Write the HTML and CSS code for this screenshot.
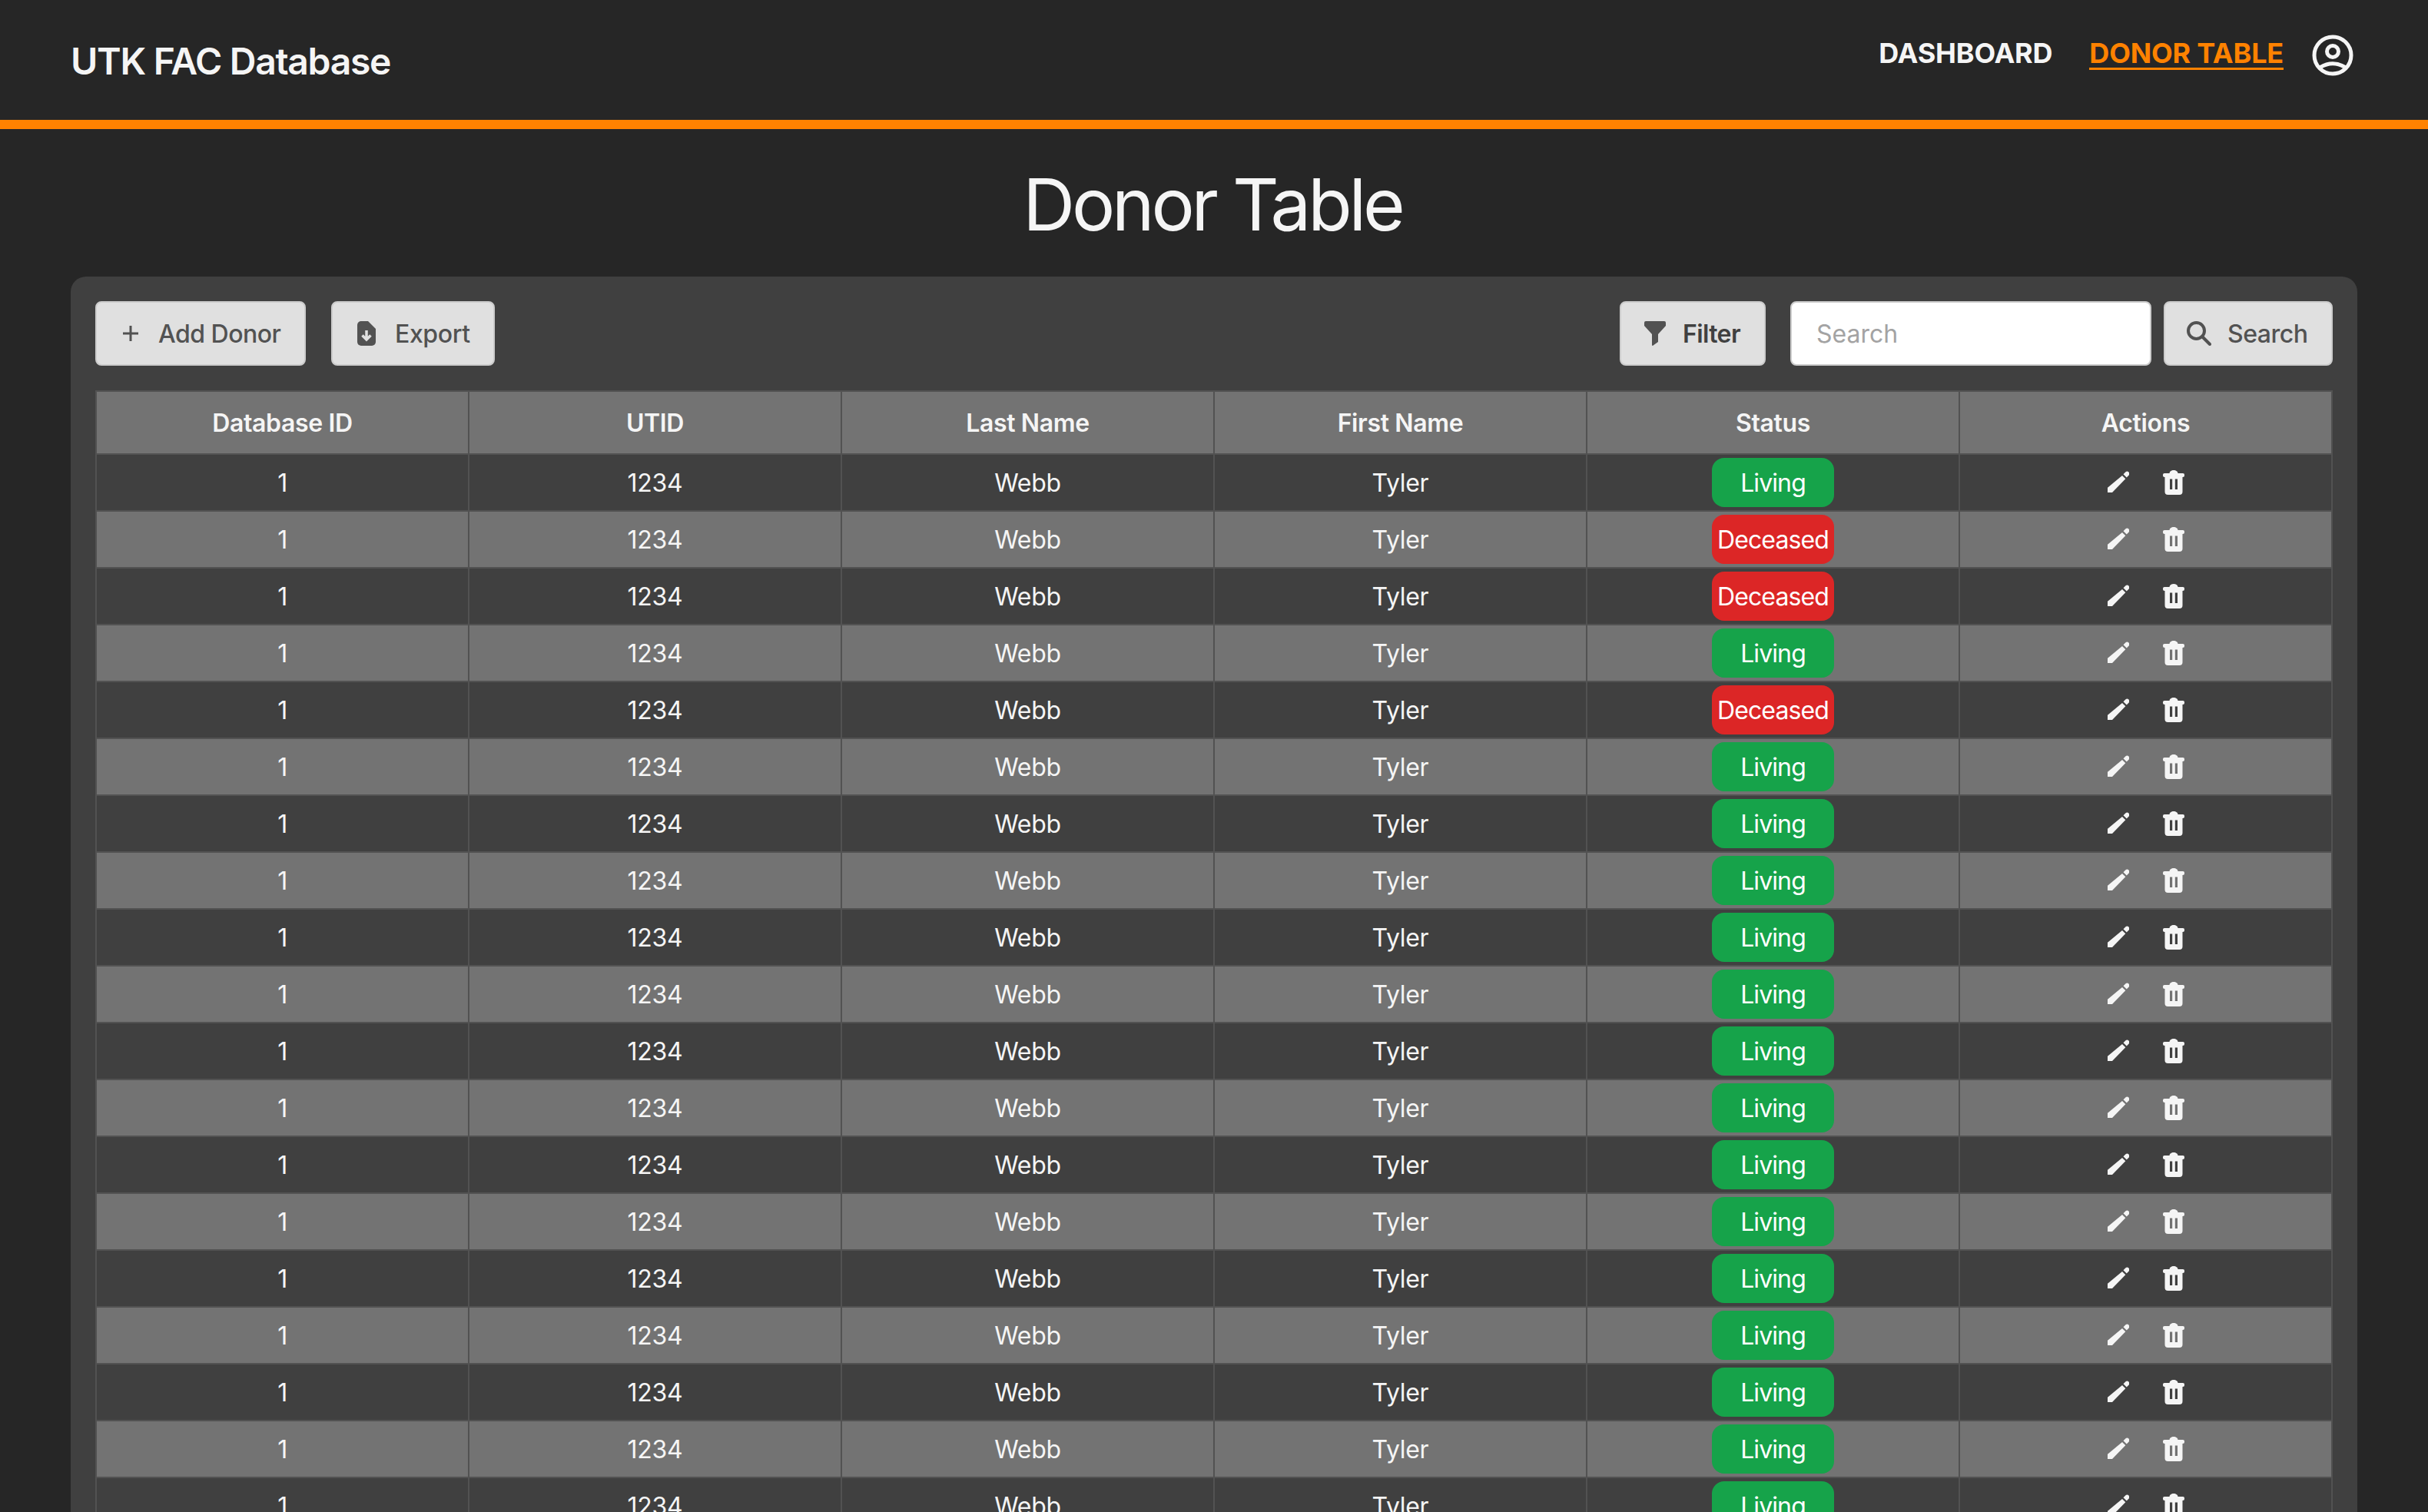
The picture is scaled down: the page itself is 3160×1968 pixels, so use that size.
FILE: index.html
```html
<!DOCTYPE html>
<html lang="en">
<head>
    <meta charset="UTF-8">
    <meta name="viewport" content="width=device-width, initial-scale=1.0">
    <title>Donor Table</title>
    <link rel="stylesheet" href="styles.css">
</head>
<body>
    <svg class="sprites" xmlns="http://www.w3.org/2000/svg">
        <symbol id="i-edit" viewBox="0 0 28 30">
            <path d="M0 21.7L19 6L23.3 10.2L6 28H0z"/>
            <path d="M20.5 4.3L23.5 1.2a3 3 0 0 1 4.2 4.2L24.8 8.6z"/>
        </symbol>
        <symbol id="i-trash" viewBox="0 0 28 32">
            <path d="M8.5 4.5C8.5 1.5 11 0 14 0s5.5 1.5 5.5 4.5z"/>
            <rect x="0" y="4" width="28" height="5" rx="2"/>
            <path fill-rule="evenodd" d="M2.5 8H25.5V28a4 4 0 0 1-4 4H6.5a4 4 0 0 1-4-4zM9 11.5V25h3.2V11.5zM15.8 11.5V25H19V11.5z"/>
        </symbol>
    </svg>

    <header class="topbar">
        <div class="brand">UTK FAC Database</div>
        <nav class="nav">
            <a class="nav-link" href="#">DASHBOARD</a>
            <a class="nav-link active" href="#">DONOR TABLE</a>
            <svg class="user-icon" viewBox="0 0 64 64" fill="none" stroke="#f5f5f5" stroke-width="5">
                <circle cx="32" cy="32" r="24"/>
                <circle cx="32" cy="27" r="7.5"/>
                <path d="M15.7 47.7Q32 37.7 48.3 47.7"/>
            </svg>
        </nav>
    </header>

    <main class="page">
        <h1 class="page-title">Donor Table</h1>
        <section class="card">
            <div class="toolbar">
                <button class="btn btn-add">
                    <svg class="btn-icon" width="20" height="20" viewBox="0 0 20 20"><path d="M8.5 0h3v8.5H20v3h-8.5V20h-3v-8.5H0v-3h8.5z"/></svg>
                    <span>Add Donor</span>
                </button>
                <button class="btn btn-export">
                    <svg class="btn-icon" width="24" height="32" viewBox="0 0 24 32">
                        <path d="M5 0H14L24 10V27a5 5 0 0 1-5 5H5a5 5 0 0 1-5-5V5a5 5 0 0 1 5-5z"/>
                        <path class="arrow" d="M12 12V24M6.5 18.5L12 24L17.5 18.5"/>
                    </svg>
                    <span>Export</span>
                </button>
                <div class="spacer"></div>
                <button class="btn btn-filter">
                    <svg class="btn-icon" width="28" height="32" viewBox="0 0 28 32"><path d="M2 0H26a2 2 0 0 1 2 2V6L18 17V27L11 32a1 1 0 0 1-1-1V17L0 6V2a2 2 0 0 1 2-2z"/></svg>
                    <span>Filter</span>
                </button>
                <input class="search-input" type="text" placeholder="Search">
                <button class="btn btn-search">
                    <svg class="btn-icon search-icon" width="32" height="32" viewBox="0 0 32 32"><circle cx="12.5" cy="12.5" r="10.5"/><path d="M20 20L30 30"/></svg>
                    <span>Search</span>
                </button>
            </div>

            <table class="donors">
                <thead>
                    <tr><th>Database ID</th><th>UTID</th><th>Last Name</th><th>First Name</th><th>Status</th><th>Actions</th></tr>
                </thead>
                <tbody>
                    <tr><td>1</td><td>1234</td><td>Webb</td><td>Tyler</td><td><span class="badge living">Living</span></td><td><div class="actions"><svg class="edit"><use href="#i-edit"/></svg><svg class="trash"><use href="#i-trash"/></svg></div></td></tr>
                    <tr><td>1</td><td>1234</td><td>Webb</td><td>Tyler</td><td><span class="badge deceased">Deceased</span></td><td><div class="actions"><svg class="edit"><use href="#i-edit"/></svg><svg class="trash"><use href="#i-trash"/></svg></div></td></tr>
                    <tr><td>1</td><td>1234</td><td>Webb</td><td>Tyler</td><td><span class="badge deceased">Deceased</span></td><td><div class="actions"><svg class="edit"><use href="#i-edit"/></svg><svg class="trash"><use href="#i-trash"/></svg></div></td></tr>
                    <tr><td>1</td><td>1234</td><td>Webb</td><td>Tyler</td><td><span class="badge living">Living</span></td><td><div class="actions"><svg class="edit"><use href="#i-edit"/></svg><svg class="trash"><use href="#i-trash"/></svg></div></td></tr>
                    <tr><td>1</td><td>1234</td><td>Webb</td><td>Tyler</td><td><span class="badge deceased">Deceased</span></td><td><div class="actions"><svg class="edit"><use href="#i-edit"/></svg><svg class="trash"><use href="#i-trash"/></svg></div></td></tr>
                    <tr><td>1</td><td>1234</td><td>Webb</td><td>Tyler</td><td><span class="badge living">Living</span></td><td><div class="actions"><svg class="edit"><use href="#i-edit"/></svg><svg class="trash"><use href="#i-trash"/></svg></div></td></tr>
                    <tr><td>1</td><td>1234</td><td>Webb</td><td>Tyler</td><td><span class="badge living">Living</span></td><td><div class="actions"><svg class="edit"><use href="#i-edit"/></svg><svg class="trash"><use href="#i-trash"/></svg></div></td></tr>
                    <tr><td>1</td><td>1234</td><td>Webb</td><td>Tyler</td><td><span class="badge living">Living</span></td><td><div class="actions"><svg class="edit"><use href="#i-edit"/></svg><svg class="trash"><use href="#i-trash"/></svg></div></td></tr>
                    <tr><td>1</td><td>1234</td><td>Webb</td><td>Tyler</td><td><span class="badge living">Living</span></td><td><div class="actions"><svg class="edit"><use href="#i-edit"/></svg><svg class="trash"><use href="#i-trash"/></svg></div></td></tr>
                    <tr><td>1</td><td>1234</td><td>Webb</td><td>Tyler</td><td><span class="badge living">Living</span></td><td><div class="actions"><svg class="edit"><use href="#i-edit"/></svg><svg class="trash"><use href="#i-trash"/></svg></div></td></tr>
                    <tr><td>1</td><td>1234</td><td>Webb</td><td>Tyler</td><td><span class="badge living">Living</span></td><td><div class="actions"><svg class="edit"><use href="#i-edit"/></svg><svg class="trash"><use href="#i-trash"/></svg></div></td></tr>
                    <tr><td>1</td><td>1234</td><td>Webb</td><td>Tyler</td><td><span class="badge living">Living</span></td><td><div class="actions"><svg class="edit"><use href="#i-edit"/></svg><svg class="trash"><use href="#i-trash"/></svg></div></td></tr>
                    <tr><td>1</td><td>1234</td><td>Webb</td><td>Tyler</td><td><span class="badge living">Living</span></td><td><div class="actions"><svg class="edit"><use href="#i-edit"/></svg><svg class="trash"><use href="#i-trash"/></svg></div></td></tr>
                    <tr><td>1</td><td>1234</td><td>Webb</td><td>Tyler</td><td><span class="badge living">Living</span></td><td><div class="actions"><svg class="edit"><use href="#i-edit"/></svg><svg class="trash"><use href="#i-trash"/></svg></div></td></tr>
                    <tr><td>1</td><td>1234</td><td>Webb</td><td>Tyler</td><td><span class="badge living">Living</span></td><td><div class="actions"><svg class="edit"><use href="#i-edit"/></svg><svg class="trash"><use href="#i-trash"/></svg></div></td></tr>
                    <tr><td>1</td><td>1234</td><td>Webb</td><td>Tyler</td><td><span class="badge living">Living</span></td><td><div class="actions"><svg class="edit"><use href="#i-edit"/></svg><svg class="trash"><use href="#i-trash"/></svg></div></td></tr>
                    <tr><td>1</td><td>1234</td><td>Webb</td><td>Tyler</td><td><span class="badge living">Living</span></td><td><div class="actions"><svg class="edit"><use href="#i-edit"/></svg><svg class="trash"><use href="#i-trash"/></svg></div></td></tr>
                    <tr><td>1</td><td>1234</td><td>Webb</td><td>Tyler</td><td><span class="badge living">Living</span></td><td><div class="actions"><svg class="edit"><use href="#i-edit"/></svg><svg class="trash"><use href="#i-trash"/></svg></div></td></tr>
                    <tr><td>1</td><td>1234</td><td>Webb</td><td>Tyler</td><td><span class="badge living">Living</span></td><td><div class="actions"><svg class="edit"><use href="#i-edit"/></svg><svg class="trash"><use href="#i-trash"/></svg></div></td></tr>
                </tbody>
            </table>
        </section>
    </main>
</body>
</html>
```
FILE: styles.css
```css
html, body {
    margin: 0;
    padding: 0;
    height: 100%;
    overflow: hidden;
}
body {
    font-family: Inter, "Liberation Sans", sans-serif;
    background-color: #262626;
    color: #f5f5f5;
}
.sprites {
    display: none;
}
.topbar {
    height: 156px;
    padding: 0 92px;
    display: flex;
    justify-content: space-between;
    align-items: center;
    border-bottom: 12px solid #ff8200;
}
.brand {
    padding-top: 2px;
    font-size: 48px;
    font-weight: 600;
    letter-spacing: -1.3px;
}
.nav {
    display: flex;
    align-items: center;
    padding-bottom: 12px;
}
.nav-link {
    font-size: 36px;
    font-weight: 700;
    line-height: 38px;
    letter-spacing: -0.2px;
    color: #f5f5f5;
    text-decoration: none;
    margin-right: 48px;
    margin-bottom: 4px;
    border-bottom: 3px solid transparent;
}
.nav-link.active {
    color: #ff8200;
    border-bottom-color: #ff8200;
    margin-right: 32px;
}
.user-icon {
    width: 64px;
    height: 64px;
}
.page {
    padding: 0 92px;
}
.page-title {
    margin: 0;
    padding: 4px 4px 0 0;
    height: 188px;
    line-height: 188px;
    font-size: 94px;
    font-weight: 400;
    letter-spacing: -4.2px;
    text-align: center;
}
.card {
    background-color: #404040;
    border-radius: 20px;
    padding: 32px;
}
.toolbar {
    display: flex;
    margin-bottom: 32px;
}
.spacer {
    flex: 1;
}
.btn {
    height: 84px;
    display: flex;
    align-items: center;
    box-sizing: border-box;
    padding: 0;
    background-color: #e0e0e0;
    border: 2px solid #cccccc;
    border-radius: 8px;
    color: #525252;
    font-family: inherit;
    font-size: 32px;
    font-weight: 500;
    white-space: nowrap;
}
.btn-icon {
    fill: #525252;
    flex: none;
}
.btn-add {
    width: 274px;
    margin-right: 33px;
    padding-left: 34px;
    gap: 26px;
    letter-spacing: -0.5px;
}
.btn-export {
    width: 213px;
    padding-left: 32px;
    gap: 25px;
    letter-spacing: -0.4px;
}
.btn-filter {
    width: 190px;
    margin-right: 32px;
    padding-left: 30px;
    gap: 22px;
    color: #404040;
    font-weight: 600;
    letter-spacing: -0.6px;
}
.btn-search {
    width: 220px;
    padding-left: 28px;
    gap: 21px;
    letter-spacing: -0.5px;
}
.search-icon {
    fill: none;
    stroke: #525252;
    stroke-width: 4;
    stroke-linecap: round;
}
.arrow {
    fill: none;
    stroke: #e0e0e0;
    stroke-width: 3.5;
}
.search-input {
    width: 470px;
    height: 84px;
    box-sizing: border-box;
    padding: 0 32px;
    margin-right: 16px;
    background-color: #fff;
    border: 2px solid #cccccc;
    border-radius: 8px;
    font-family: inherit;
    font-size: 32px;
}
.search-input::placeholder {
    color: #a3a3a3;
}
.donors {
    width: 100%;
    table-layout: fixed;
    border-collapse: collapse;
}
.donors th,
.donors td {
    border: 2px solid #525252;
    text-align: center;
    font-size: 32px;
    line-height: 40px;
}
.donors th {
    padding: 21px 0 19px;
    font-weight: 600;
    letter-spacing: -0.35px;
    background-color: #737373;
}
.donors td {
    padding: 5px 0 3px;
    font-weight: 400;
    letter-spacing: -0.3px;
}
/* status and actions cells set the row height, keep them centred */
.donors td:nth-child(n+5) {
    padding: 4px 0;
}
.donors tbody tr:nth-child(even) td {
    background-color: #737373;
}
.badge {
    display: inline-flex;
    align-items: center;
    justify-content: center;
    vertical-align: middle;
    box-sizing: border-box;
    width: 159px;
    height: 64px;
    padding-top: 2px;
    border-radius: 16px;
    color: #fff;
    letter-spacing: -0.9px;
}
.living {
    background-color: #16a34a;
}
.deceased {
    background-color: #dc2626;
}
.actions {
    display: flex;
    justify-content: center;
    align-items: center;
    gap: 44px;
    fill: #f5f5f5;
}
.edit {
    width: 28px;
    height: 30px;
}
.trash {
    width: 28px;
    height: 32px;
}
```
